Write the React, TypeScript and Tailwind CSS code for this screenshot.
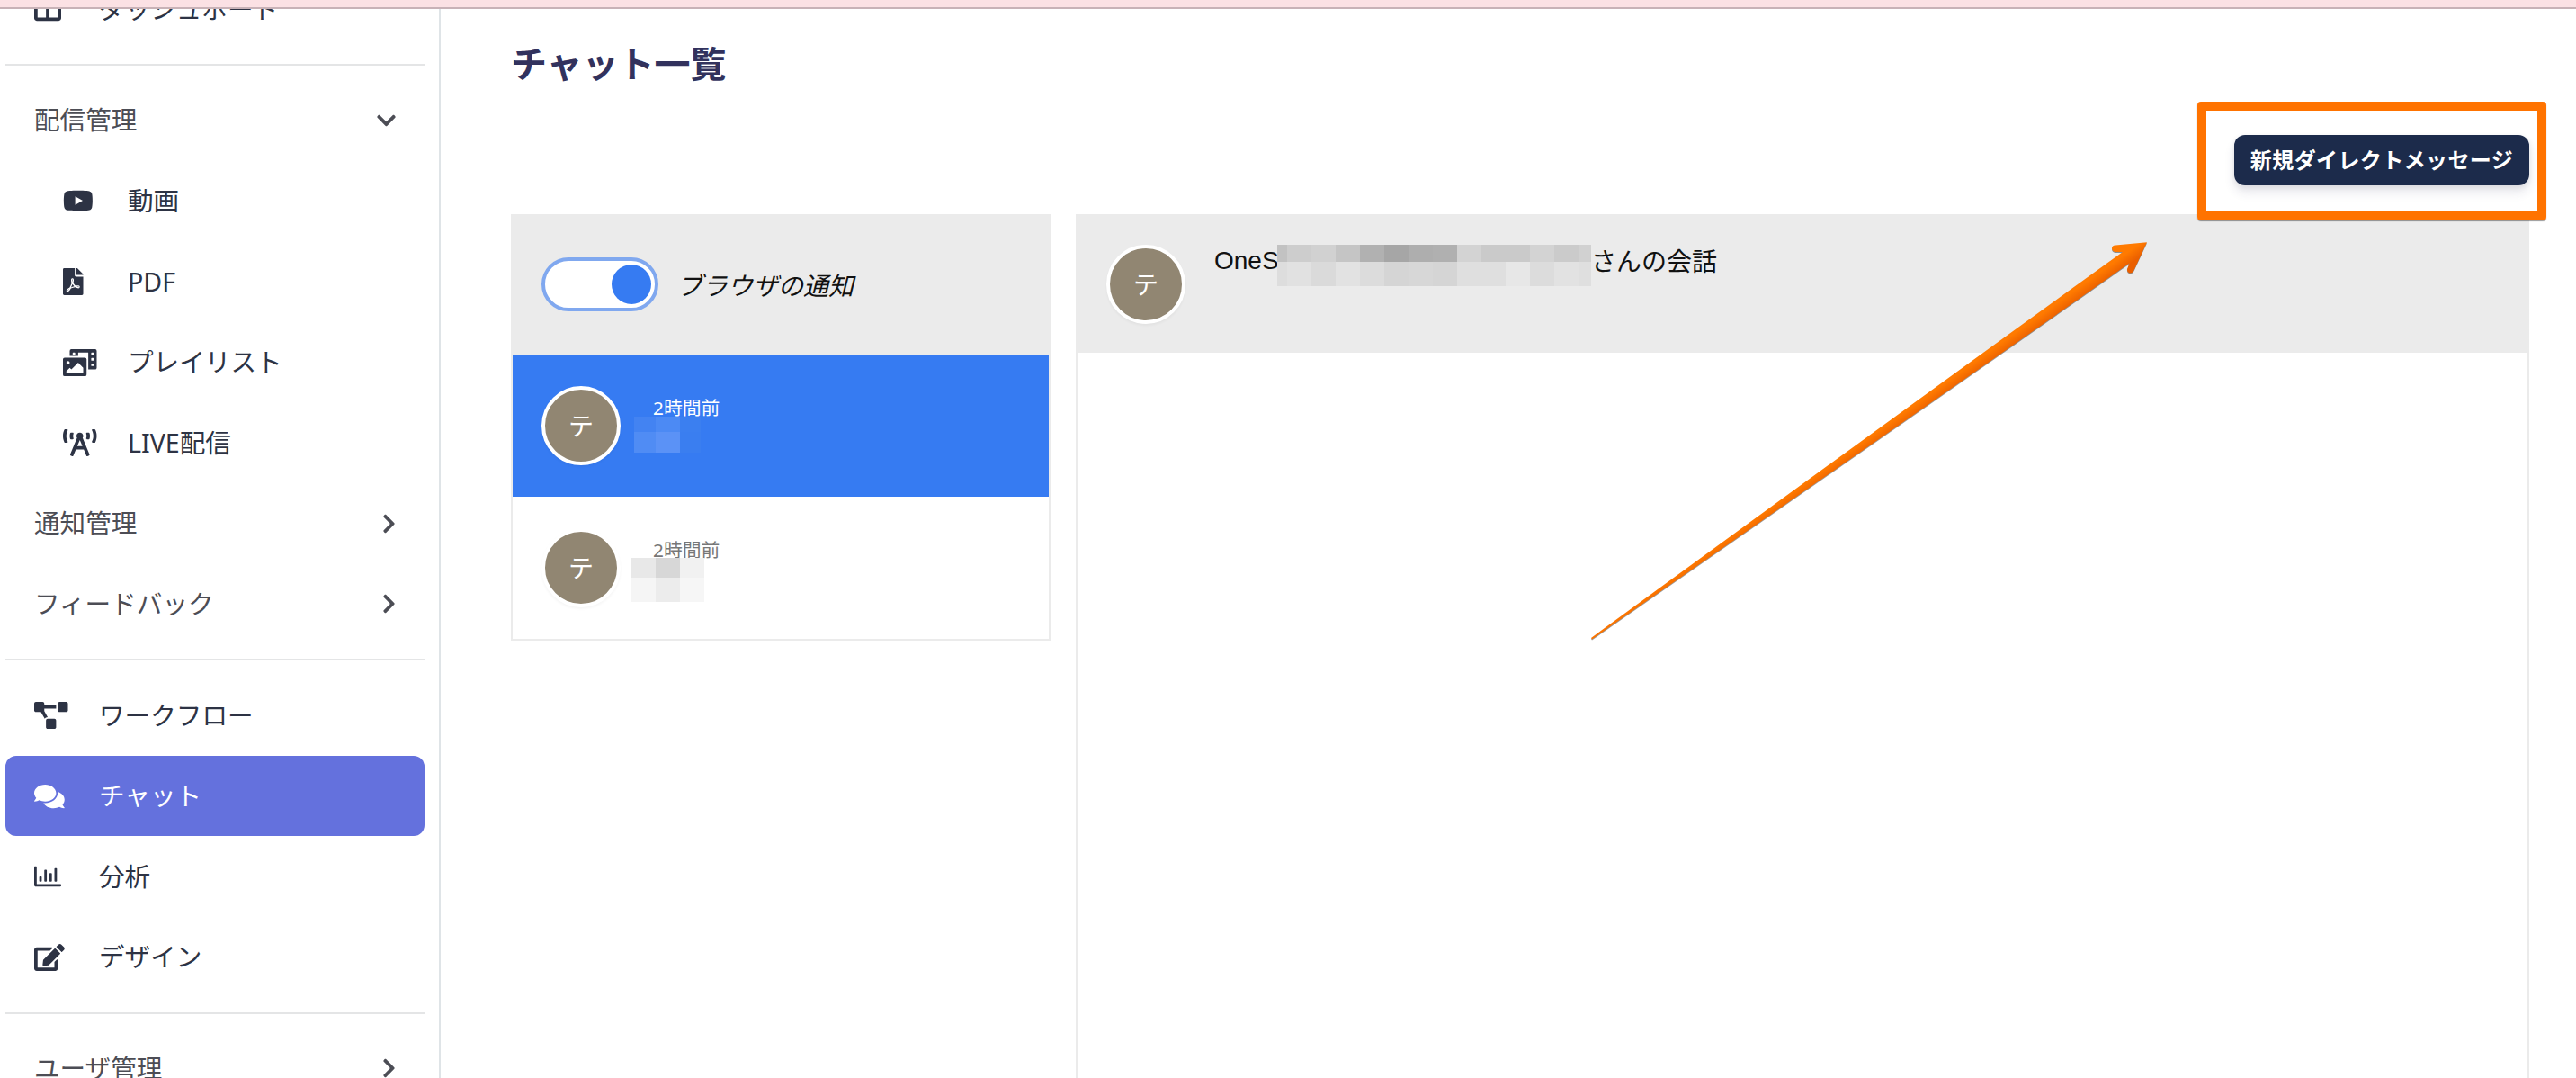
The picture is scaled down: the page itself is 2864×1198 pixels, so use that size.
import {
  FaBroadcastTower, FaChevronDown, FaChevronRight, FaColumns, FaComments, FaEdit,
  FaFilePdf, FaPhotoVideo, FaProjectDiagram, FaRegChartBar, FaYoutube,
} from "react-icons/fa";
import type { ReactNode } from "react";

function Row({ icon, label, sub, active }: { icon: ReactNode; label: string; sub?: boolean; active?: boolean }) {
  return (
    <div
      className={`flex h-[89.6px] shrink-0 items-center rounded-xl text-[28.6px] ${sub ? "pl-16" : "pl-8"} ${
        active ? "bg-[#6471dd] text-white" : "text-[#2d3344]"
      }`}
    >
      <span className="flex w-[72px] shrink-0 items-center">{icon}</span>
      <span className="whitespace-nowrap">{label}</span>
    </div>
  );
}

function Group({ label, open }: { label: string; open?: boolean }) {
  return (
    <div className="flex h-[89.6px] shrink-0 items-center justify-between pl-8 pr-8 text-[28.6px] text-[#4c4d55]">
      <span className="whitespace-nowrap">{label}</span>
      {open ? <FaChevronDown className="h-6 w-[21px]" /> : <FaChevronRight className="h-6 w-[15px]" />}
    </div>
  );
}

function Divider() {
  return <div className="my-4 h-[2px] shrink-0 bg-[#e4e5e6]" />;
}

function Avatar() {
  return (
    <div className="flex size-[88px] shrink-0 items-center justify-center rounded-full border-4 border-white bg-[#918672] text-[28px] text-white shadow-[0_2px_3px_rgba(0,0,0,0.04)]">
      テ
    </div>
  );
}

function Mosaic({ rows, widths, heights }: { rows: string[][]; widths: number[]; heights: number[] }) {
  return (
    <div>
      {rows.map((row, r) => (
        <div key={r} className="flex">
          {row.map((color, c) => (
            <div key={c} style={{ width: widths[c], height: heights[r], background: color }} />
          ))}
        </div>
      ))}
    </div>
  );
}

const headerTop = ["#c2c2c2", "#cdcdcd", "#d1d1d1", "#c5c5c5", "#b1b1b1", "#a6a6a6", "#aeaeae", "#b0b0b0", "#d3d3d3", "#cacaca", "#cacaca", "#d3d3d3", "#cbcbcb", "#d1d1d1"];
const headerBottom = ["#dddddd", "#e1e1e1", "#dadada", "#e2e2e2", "#dcdcdc", "#d5d5d5", "#d7d7d7", "#d5d5d5", "#dfdfdf", "#dfdfdf", "#e7e7e7", "#dcdcdc", "#e2e2e2", "#dfdfdf"];

export default function App() {
  return (
    <div className="relative flex h-[1198px] w-[2864px] flex-col overflow-hidden bg-white font-['Noto_Sans','Noto_Sans_CJK_JP',sans-serif]">
      <div className="z-10 h-[10px] shrink-0 border-b-2 border-[#c8b2b7] bg-[#fbe1e4]" />
      <div className="flex min-h-0 flex-1">
        <nav className="flex w-[490px] shrink-0 flex-col overflow-hidden border-r-2 border-[#dfe4e7] pl-[6px] pr-4">
          <div className="-mt-[44.6px] shrink-0">
            <Row icon={<FaColumns className="size-[30px]" />} label="ダッシュボード" />
          </div>
          <Divider />
          <Group label="配信管理" open />
          <Row sub icon={<FaYoutube className="h-[30px] w-[33.75px]" />} label="動画" />
          <Row sub icon={<FaFilePdf className="h-[30px] w-[22.5px]" />} label="PDF" />
          <Row sub icon={<FaPhotoVideo className="h-[30px] w-[37.5px]" />} label="プレイリスト" />
          <Row sub icon={<FaBroadcastTower className="h-[30px] w-[37.5px]" />} label="LIVE配信" />
          <Group label="通知管理" />
          <Group label="フィードバック" />
          <Divider />
          <Row icon={<FaProjectDiagram className="h-[30px] w-[37.5px]" />} label="ワークフロー" />
          <Row active icon={<FaComments className="h-[30px] w-[33.75px]" />} label="チャット" />
          <Row icon={<FaRegChartBar className="size-[30px]" />} label="分析" />
          <Row icon={<FaEdit className="h-[30px] w-[33.75px]" />} label="デザイン" />
          <Divider />
          <Group label="ユーザ管理" />
        </nav>

        <main className="flex min-w-0 flex-1 flex-col pl-[78px] pr-[52px] text-[#111]">
          <h1 className="mt-[31px] h-[59px] text-[40px] font-bold leading-[60px] text-[#32325d]">チャット一覧</h1>
          <div className="mt-[50px] flex justify-end">
            <button className="h-[56px] w-[328px] whitespace-nowrap rounded-xl bg-[#1c2b4b] text-[24px] font-bold tracking-[0.4px] text-white shadow-[0_8px_12px_rgba(50,50,93,0.11),0_2px_6px_rgba(0,0,0,0.08)]">
              新規ダイレクトメッセージ
            </button>
          </div>
          <div className="mt-8 flex min-h-0 flex-1 gap-7">
            <section className="flex h-[474px] w-[600px] shrink-0 flex-col border-2 border-t-0 border-[#ebebeb]">
              <div className="flex h-[156px] items-center bg-[#ebebeb] pl-8">
                <div className="flex h-[60px] w-[130px] items-center justify-end rounded-full border-4 border-[#80a8ef] bg-white pr-1">
                  <div className="size-[44px] rounded-full bg-[#367bf2]" />
                </div>
                <span className="ml-[21px] mt-[2px] text-[28px] italic">ブラウザの通知</span>
              </div>
              <div className="flex h-[158px] bg-[#367bf2] pl-8 pt-[35px]">
                <Avatar />
                <div className="flex flex-col">
                  <span className="ml-[36px] mt-[9px] h-[25px] text-[20.8px] leading-[30px] text-white">2時間前</span>
                  <div className="ml-[15px]">
                    <Mosaic widths={[24, 27, 23]} heights={[17, 23]} rows={[["#4383f2", "#4c8af4", "#3b7ff0"], ["#508cf4", "#5b92f6", "#3a7ef0"]]} />
                  </div>
                </div>
              </div>
              <div className="flex h-[158px] bg-white pl-8 pt-[35px]">
                <Avatar />
                <div className="flex flex-col">
                  <span className="ml-[36px] mt-[9px] h-[24px] text-[20.8px] leading-[30px] text-[#777]">2時間前</span>
                  <div className="relative ml-[11px]">
                    <Mosaic widths={[1, 27, 27, 27]} heights={[22, 27]} rows={[["#c0b8a4", "#e8e8e8", "#d7d7d7", "#f1f1f1"], ["#f5f5f5", "#f5f5f5", "#ececec", "#f6f6f6"]]} />
                  </div>
                </div>
              </div>
            </section>

            <section className="min-w-0 flex-1 border-x-2 border-[#ebebeb]">
              <div className="flex h-[154px] bg-[#ebebeb] pl-8 pt-[34px]">
                <Avatar />
                <span className="ml-8 mt-[-2px] h-10 w-[70px] whitespace-nowrap text-[28px] leading-10 font-['Liberation_Sans',sans-serif]">OneS</span>
                <Mosaic widths={[11, 27, 27, 27, 27, 27, 27, 27, 27, 27, 27, 27, 27, 14]} heights={[19, 27]} rows={[headerTop, headerBottom]} />
                <span className="mt-[-2px] h-10 whitespace-nowrap text-[28px] leading-10">さんの会話</span>
              </div>
            </section>
          </div>
        </main>
      </div>

      <div className="absolute left-[2443px] top-[113px] h-[132px] w-[388px] rounded-[4px] border-[10px] border-[#ff7300] shadow-[0_1px_1px_rgba(0,0,0,0.4)]" />
      <svg className="absolute left-[1760px] top-[260px] drop-shadow-[0_1px_0.5px_rgba(0,0,0,0.4)]" width="640" height="460" viewBox="1760 260 640 460">
        <defs>
          <linearGradient id="arrow" gradientUnits="userSpaceOnUse" x1="2346" y1="288" x2="2356" y2="302">
            <stop offset="0.3" stopColor="#ff7a00" />
            <stop offset="1" stopColor="#ea5f00" />
          </linearGradient>
        </defs>
        <path
          d="M1769 709Q2190 402 2360 280L2352 280Q2348 279.500 2348 276Q2348 272.800 2352 272.500L2387 269.300L2372.500 300.500Q2370.500 304 2367.500 303.500Q2364.500 302.500 2365 299L2367.500 292.500Q2190 418 1770 710.500Z"
          fill="url(#arrow)"
        />
      </svg>
    </div>
  );
}
